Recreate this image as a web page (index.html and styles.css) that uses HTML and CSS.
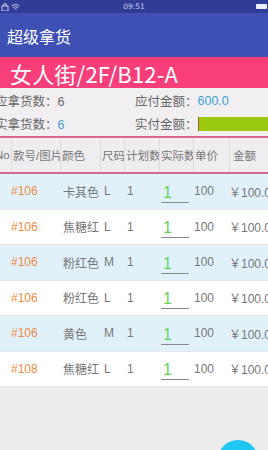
FILE: index.html
```html
<!DOCTYPE html>
<html lang="zh">

<head>
    <meta charset="UTF-8">
    <meta name="viewport" content="width=device-width, initial-scale=1.0">
    <title>超级拿货</title>
    <link rel="stylesheet" href="styles.css">
</head>

<body>
    <!-- Status bar -->
    <div class="status">
        <div class="status-left">
            <svg width="8" height="8" viewBox="0 0 8 8"><rect x="1" y="3" width="6" height="5" fill="none" stroke="#c9cfee" stroke-width="1"/><path d="M2.5 3V2a1.5 1.5 0 0 1 3 0v1" fill="none" stroke="#c9cfee"/></svg>
            <svg width="9" height="8" viewBox="0 0 9 8"><path d="M0.5 3a6 6 0 0 1 8 0M2 4.6a4 4 0 0 1 5 0M3.4 6.1a2 2 0 0 1 2.2 0" fill="none" stroke="#c9cfee" stroke-width="1"/></svg>
        </div>
        <span class="time">09:51</span>
        <div class="battery"></div>
    </div>

    <!-- App bar -->
    <div class="appbar">超级拿货</div>

    <!-- Stall location -->
    <div class="shop">女人街/2F/B12-A</div>

    <!-- Summary -->
    <div class="summary">
        <div class="sum-row">
            <span class="sum-left">应拿货数：6</span>
            <span class="sum-right">应付金额：<span class="blue">600.0</span></span>
        </div>
        <div class="sum-row">
            <span class="sum-left">实拿货数：<span class="blue">6</span></span>
            <span class="sum-right">实付金额：<span class="paybar"></span></span>
        </div>
    </div>

    <!-- Goods table -->
    <div class="table">
        <div class="thead">
            <div class="th"><span class="no">No</span></div>
            <div class="th">款号/图片</div>
            <div class="th">颜色</div>
            <div class="th">尺码</div>
            <div class="th">计划数</div>
            <div class="th">实际数</div>
            <div class="th">单价</div>
            <div class="th">金额</div>
        </div>
        <div id="rows"></div>
    </div>

    <div class="fab"></div>

    <script>
        const items = [
            ['#106', '卡其色', 'L'],
            ['#106', '焦糖红', 'L'],
            ['#106', '粉红色', 'M'],
            ['#106', '粉红色', 'L'],
            ['#106', '黄色', 'M'],
            ['#108', '焦糖红', 'L']
        ];
        const rows = document.getElementById('rows');
        items.forEach(([code, color, size], i) => {
            const row = document.createElement('div');
            row.className = 'row' + (i % 2 === 0 ? ' alt' : '');
            row.innerHTML = `<span class="code">${code}</span>
                <span>${color}</span>
                <span>${size}</span>
                <span>1</span>
                <span class="qty"><span class="qty-input">1</span></span>
                <span>100</span>
                <span>￥100.0</span>`;
            rows.appendChild(row);
        });
    </script>
</body>

</html>
```

FILE: styles.css
```css
body {
    margin: 0;
    width: 268px;
    height: 450px;
    overflow: hidden;
    position: relative;
    background-color: #ececec;
    font-family: 'Liberation Sans', 'Noto Sans CJK SC', sans-serif;
    color: #777;
}

.status {
    height: 13px;
    background-color: #2f3d96;
    display: flex;
    align-items: center;
    justify-content: space-between;
    padding: 0 1px 0 1px;
    color: #c9cfee;
    font-size: 8px;
}

.status-left {
    display: flex;
    gap: 2px;
    width: 40px;
}

.time {
    font-family: 'DejaVu Sans', sans-serif;
    font-size: 7.5px;
}

.battery {
    width: 11px;
    height: 5px;
    background: #eef0fb;
    border-radius: 1px;
    margin-left: 29px;
}

.appbar {
    height: 44px;
    background-color: #3e50b3;
    color: #fff;
    font-size: 16px;
    line-height: 46px;
    padding-left: 7px;
    font-family: 'Noto Sans CJK SC', sans-serif;
}

.shop {
    height: 31px;
    background-color: #f83f79;
    color: #fff;
    font-size: 22px;
    line-height: 33px;
    padding-left: 10px;
    font-family: 'Noto Sans CJK SC', sans-serif;
    letter-spacing: 0.2px;
}

.summary {
    background-color: #f1eff1;
    padding: 1px 0 1px;
    font-size: 12.5px;
    color: #666;
}

.sum-row {
    display: flex;
    height: 23px;
    align-items: center;
}

.sum-left {
    width: 140px;
    margin-left: -5px;
    flex-shrink: 0;
}

.sum-right {
    display: flex;
    align-items: center;
    flex: 1;
}

.blue {
    color: #3b9fd6;
}

.paybar {
    flex: 1;
    height: 14px;
    background-color: #9bc90f;
    border-left: 1px solid #b0542a;
    margin-right: -4px;
}

.table {
    border-top: 2px solid #d9678f;
}

.thead {
    display: grid;
    grid-template-columns: 12px 49px 40px 24px 35px 34px 36px 1fr;
    height: 34px;
    background-color: #efedef;
    border-bottom: 2px solid #d9678f;
    font-size: 11.5px;
    color: #777;
}

.th {
    display: flex;
    align-items: center;
    border-right: 1px solid #dcdcdc;
    padding-left: 1px;
    white-space: nowrap;
    overflow: hidden;
}

.th:first-child {
    padding: 0;
}

.no {
    margin-left: -5px;
}

.th:last-child {
    border-right: none;
    padding-left: 3px;
}

.row {
    display: grid;
    grid-template-columns: 63px 41px 23px 36px 31px 35px 1fr;
    height: 35.5px;
    align-items: center;
    background-color: #fff;
    font-size: 12px;
    color: #777;
    white-space: nowrap;
    box-sizing: border-box;
    border-bottom: 1px solid #e6e6e6;
}

.row.alt {
    background-color: #e1f1fa;
}

.code {
    color: #ee8a44;
    padding-left: 11px;
}

.qty-input {
    display: inline-block;
    width: 28px;
    margin-left: -2px;
    padding-left: 2px;
    box-sizing: border-box;
    color: #63d35c;
    font-size: 16px;
    line-height: 18px;
    border-bottom: 1px solid #888;
    margin-top: 4px;
}

.fab {
    position: absolute;
    left: 218px;
    top: 440px;
    width: 40px;
    height: 40px;
    border-radius: 50%;
    background-color: #1ec6f2;
}
```
